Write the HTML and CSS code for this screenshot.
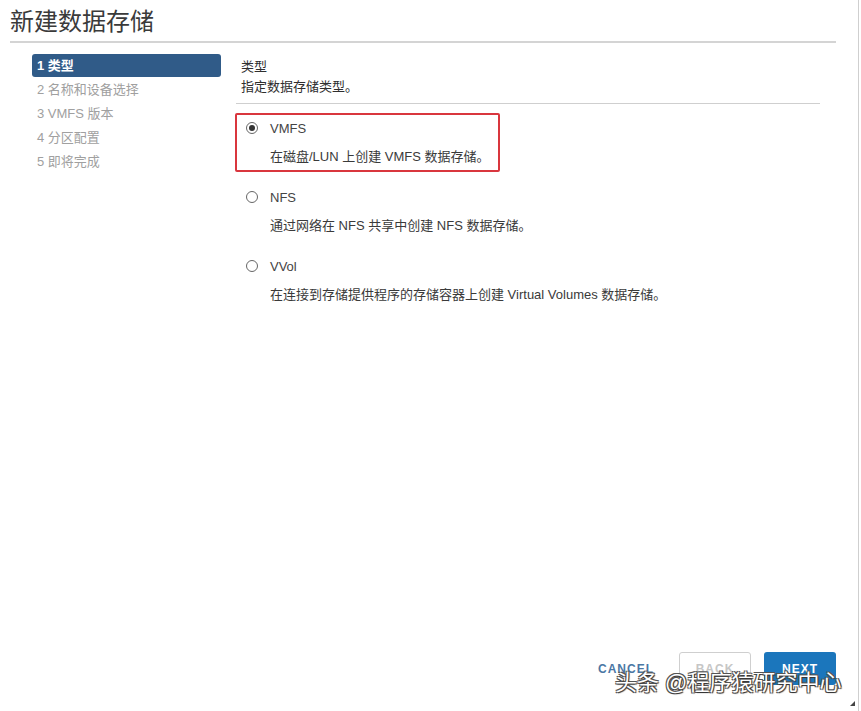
FILE: index.html
```html
<!DOCTYPE html>
<html lang="zh-CN">
<head>
    <meta charset="UTF-8">
    <meta name="viewport" content="width=device-width, initial-scale=1.0">
    <title>新建数据存储</title>
    <link rel="stylesheet" href="styles.css">
</head>
<body>
    <div class="wizard">
        <div class="wizard-header">
            <h1>新建数据存储</h1>
        </div>

        <div class="wizard-body">
            <ul class="steps">
                <li class="step active">1 类型</li>
                <li class="step">2 名称和设备选择</li>
                <li class="step">3 VMFS 版本</li>
                <li class="step">4 分区配置</li>
                <li class="step">5 即将完成</li>
            </ul>

            <div class="content">
                <div class="content-head">
                    <div class="content-title">类型</div>
                    <div class="content-desc">指定数据存储类型。</div>
                </div>

                <div class="option selected">
                    <div class="option-row">
                        <span class="radio checked"></span>
                        <span class="option-label">VMFS</span>
                    </div>
                    <div class="option-desc">在磁盘/LUN 上创建 VMFS 数据存储。</div>
                </div>

                <div class="option">
                    <div class="option-row">
                        <span class="radio"></span>
                        <span class="option-label">NFS</span>
                    </div>
                    <div class="option-desc">通过网络在 NFS 共享中创建 NFS 数据存储。</div>
                </div>

                <div class="option">
                    <div class="option-row">
                        <span class="radio"></span>
                        <span class="option-label">VVol</span>
                    </div>
                    <div class="option-desc">在连接到存储提供程序的存储容器上创建 Virtual Volumes 数据存储。</div>
                </div>
            </div>
        </div>

        <div class="wizard-footer">
            <button class="btn btn-link">CANCEL</button>
            <button class="btn btn-outline" disabled>BACK</button>
            <button class="btn btn-primary">NEXT</button>
        </div>

        <div class="watermark">头条 @程序猿研究中心</div>
        <div class="resize-grip"></div>
    </div>
</body>
</html>
```

FILE: styles.css
```css
* {
    box-sizing: border-box;
    margin: 0;
    padding: 0;
}

body {
    background-color: #fff;
    color: #333;
    font-family: "Liberation Sans", "Noto Sans CJK SC", sans-serif;
    font-size: 13px;
}

.wizard {
    position: relative;
    width: 859px;
    height: 711px;
    border-right: 1px solid #cfcfcf;
    display: flex;
    flex-direction: column;
}

/* 标题 */
.wizard-header {
    margin: 0 22px 0 10px;
    padding-top: 8px;
    padding-bottom: 5px;
    border-bottom: 2px solid #d4d4d4;
}

.wizard-header h1 {
    font-size: 24px;
    font-weight: normal;
    line-height: 28px;
    color: #3a3a3a;
}

.wizard-body {
    display: flex;
    gap: 15px;
    padding: 11px 0 0 32px;
}

/* 左侧步骤 */
.steps {
    list-style: none;
    width: 189px;
}

.step {
    height: 24px;
    line-height: 24px;
    padding-left: 5px;
    color: #a0a0a0;
}

.step.active {
    height: 23px;
    line-height: 23px;
    margin-bottom: 1px;
    background-color: #305b88;
    border-radius: 3px;
    color: #fff;
    font-weight: bold;
}

/* 右侧内容 */
.content {
    width: 584px;
    padding-top: 3px;
}

.content-head {
    padding: 0 0 6px 5px;
    border-bottom: 1px solid #cfcfcf;
    margin-bottom: 9px;
}

.content-title,
.content-desc {
    line-height: 20px;
    color: #2e2e2e;
}

.option {
    width: fit-content;
    margin-left: -1px;
    padding: 3px 8px 3px 9px;
    border: 2px solid transparent;
    margin-bottom: 10px;
}

.option.selected {
    border-color: #d9363e;
    border-radius: 2px;
}

.option-row {
    display: flex;
    align-items: center;
    gap: 12px;
    height: 20px;
    color: #444;
}

.radio {
    width: 12px;
    height: 12px;
    border: 1px solid #666;
    border-radius: 50%;
    display: flex;
    align-items: center;
    justify-content: center;
}

.radio.checked::after {
    content: "";
    width: 6px;
    height: 6px;
    border-radius: 50%;
    background-color: #333;
}

.option-desc {
    margin-top: 9px;
    margin-left: 24px;
    line-height: 20px;
    color: #3a3a3a;
}

/* 底部按钮 */
.wizard-footer {
    margin-top: auto;
    display: flex;
    justify-content: flex-end;
    gap: 13px;
    padding: 0 22px 26px 0;
}

.btn {
    width: 72px;
    height: 33px;
    border-radius: 3px;
    font-family: "Liberation Sans", sans-serif;
    font-size: 12px;
    font-weight: bold;
    letter-spacing: 1px;
    background: none;
    border: 1px solid transparent;
}

.btn-link {
    width: 80px;
    color: #4b77a4;
}

.btn-outline {
    border-color: #cfcfcf;
    color: #c6c6c6;
}

.btn-primary {
    background-color: #1b76bc;
    color: #fff;
}

/* 水印 */
.watermark {
    position: absolute;
    left: 615px;
    top: 669px;
    font-size: 22px;
    line-height: 28px;
    color: #fff;
    white-space: nowrap;
    text-shadow: 1px 1px 1px #333, -1px -1px 0 #555, 1px -1px 0 #555, -1px 1px 0 #555;
}

.resize-grip {
    position: absolute;
    right: 3px;
    bottom: 5px;
    width: 0;
    height: 0;
    border-left: 5px solid transparent;
    border-bottom: 5px solid #444;
}
```
